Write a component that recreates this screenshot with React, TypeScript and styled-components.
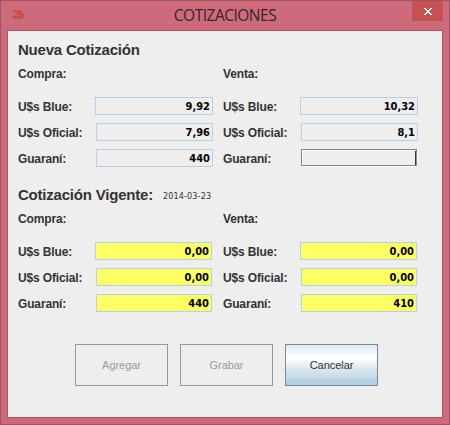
import React from "react";
import styled, { createGlobalStyle } from "styled-components";

const GlobalStyle = createGlobalStyle`
  body { margin: 0; }
  * { box-sizing: border-box; }
`;

const Window = styled.div`
  width: 450px;
  height: 425px;
  display: flex;
  flex-direction: column;
  padding: 0 6px 6px;
  background: #cd6a7c;
  border: 1px solid #a15362;
`;

const TitleBar = styled.header`
  height: 29px;
  flex: none;
  display: grid;
  grid-template-columns: 32px 1fr 31px;
`;

const AppIcon = styled.svg`
  display: block;
  margin: 8px 0 0 5px;
`;

const Title = styled.h1`
  margin: 0;
  padding-right: 1px;
  text-align: center;
  font: 400 15.5px/29px "Open Sans", sans-serif;
  letter-spacing: -0.5px;
  color: #35242a;
`;

const CloseButton = styled.button`
  width: 31px;
  height: 20px;
  padding: 1px 0 0;
  border: 0;
  background: #c75050;
  display: flex;
  align-items: center;
  justify-content: center;
`;

const Panel = styled.main`
  flex: 1;
  border: 1px solid #ab5566;
  background: #eeeeee;
  padding: 10px 0 0 10px;
  font-family: "Liberation Sans", Arial, sans-serif;
  color: #333333;
`;

const Section = styled.section`
  height: 145px;
`;

const Heading = styled.div`
  height: 18px;
  display: flex;
  align-items: center;
`;

const SectionTitle = styled.h2`
  margin: 0;
  font-size: 15px;
  line-height: 18px;
  font-weight: 700;
  letter-spacing: -0.21px;
  white-space: nowrap;
`;

const DateText = styled.span`
  margin: 1px 0 0 10px;
  font: 400 9px/14px "DejaVu Sans Condensed", "DejaVu Sans", sans-serif;
  font-stretch: condensed;
  letter-spacing: 0.12px;
`;

const Columns = styled.div`
  display: grid;
  grid-template-columns: 205px 205px;
`;

const ColumnTitle = styled.h3`
  margin: 6px 0 14px;
  font-size: 12px;
  line-height: 18px;
  font-weight: 700;
  letter-spacing: -0.15px;
`;

const Fields = styled.div`
  display: flex;
  flex-direction: column;
  gap: 8px;
`;

const Field = styled.label<{ $wide?: boolean }>`
  height: 18px;
  display: grid;
  grid-template-columns: ${(p) => (p.$wide ? "77px" : "78px")} 1fr;
  font-size: 12px;
  line-height: 20px;
  font-weight: 700;
  letter-spacing: -0.15px;
  white-space: nowrap;
`;

const Value = styled.span<{ $yellow?: boolean; $end: number }>`
  height: 18px;
  margin-right: ${(p) => p.$end}px;
  padding-right: 2px;
  border: 1px solid #b8cfe5;
  background: ${(p) => (p.$yellow ? "#ffff66" : "#eeeeee")};
  color: #000;
  text-align: right;
  font: 700 11px/18px "DejaVu Sans Condensed", "DejaVu Sans", sans-serif;
  font-stretch: condensed;
  letter-spacing: 0;
`;

const FocusedValue = styled.span`
  height: 17px;
  margin-right: 11px;
  border: 1px solid #7a8a99;
  box-shadow: inset 1px 1px #fff, 1px 1px #fff;
  display: flex;
  justify-content: flex-end;
  align-items: center;
`;

const Caret = styled.span`
  width: 1px;
  height: 14px;
  background: #333;
`;

const Actions = styled.footer`
  display: flex;
  gap: 12px;
  margin: 13px 0 0 57px;
`;

const ActionButton = styled.button<{ $primary?: boolean }>`
  width: 93px;
  height: 42px;
  padding: 0;
  border: 1px solid ${(p) => (p.$primary ? "#7a8a99" : "#999999")};
  background: ${(p) =>
    p.$primary
      ? "linear-gradient(#dde8f3 0%, #ffffff 30%, #ffffff 34%, #dce6ee 60%, #c5dde9 80%, #b8cfe5 90%, #b8cfe5 100%)"
      : "#eeeeee"};
  color: ${(p) => (p.$primary ? "#333333" : "#999999")};
  font: 400 11px "Liberation Sans", Arial, sans-serif;
  letter-spacing: -0.05px;
`;

const names = ["U$s Blue:", "U$s Oficial:", "Guaraní:"];

type ColumnProps = {
  title: string;
  values: (string | null)[];
  current?: boolean;
  end: number;
};

function QuoteColumn({ title, values, current, end }: ColumnProps) {
  return (
    <div>
      <ColumnTitle>{title}</ColumnTitle>
      <Fields>
        {names.map((name, i) => (
          <Field key={name} $wide={i === 0}>
            {name}
            {values[i] === null ? (
              <FocusedValue>
                <Caret />
              </FocusedValue>
            ) : (
              <Value $yellow={current} $end={end}>
                {values[i]}
              </Value>
            )}
          </Field>
        ))}
      </Fields>
    </div>
  );
}

export default function App() {
  return (
    <>
      <GlobalStyle />
      <Window>
        <TitleBar>
          <AppIcon width="12" height="10" viewBox="0 0 12 10" shapeRendering="crispEdges">
            <path d="M2 0H9V1H2Z" fill="#d5764f" />
            <path
              d="M1 1H9V2H10V4H11V5H12V8H11V10H1V9H0V7H6V6H3V4H5V3H1Z"
              fill="#c9504c"
            />
          </AppIcon>
          <Title>COTIZACIONES</Title>
          <CloseButton aria-label="Cerrar">
            <svg width="8" height="7" viewBox="0 0 8 7" shapeRendering="crispEdges">
              <path
                d="M0 0h2v1h1v1h2v-1h1v-1h2v1h-1v1h-1v1h-1v1h1v1h1v1h1v1h-2v-1h-1v-1h-2v1h-1v1h-2v-1h1v-1h1v-1h1v-1h-1v-1h-1v-1h-1z"
                fill="#fff"
              />
            </svg>
          </CloseButton>
        </TitleBar>
        <Panel>
          <Section>
            <Heading>
              <SectionTitle>Nueva Cotización</SectionTitle>
            </Heading>
            <Columns>
              <QuoteColumn title="Compra:" values={["9,92", "7,96", "440"]} end={10} />
              <QuoteColumn title="Venta:" values={["10,32", "8,1", null]} end={10} />
            </Columns>
          </Section>
          <Section>
            <Heading>
              <SectionTitle>Cotización Vigente:</SectionTitle>
              <DateText>2014-03-23</DateText>
            </Heading>
            <Columns>
              <QuoteColumn title="Compra:" values={["0,00", "0,00", "440"]} current end={11} />
              <QuoteColumn title="Venta:" values={["0,00", "0,00", "410"]} current end={11} />
            </Columns>
          </Section>
          <Actions>
            <ActionButton disabled>Agregar</ActionButton>
            <ActionButton disabled>Grabar</ActionButton>
            <ActionButton $primary>Cancelar</ActionButton>
          </Actions>
        </Panel>
      </Window>
    </>
  );
}
